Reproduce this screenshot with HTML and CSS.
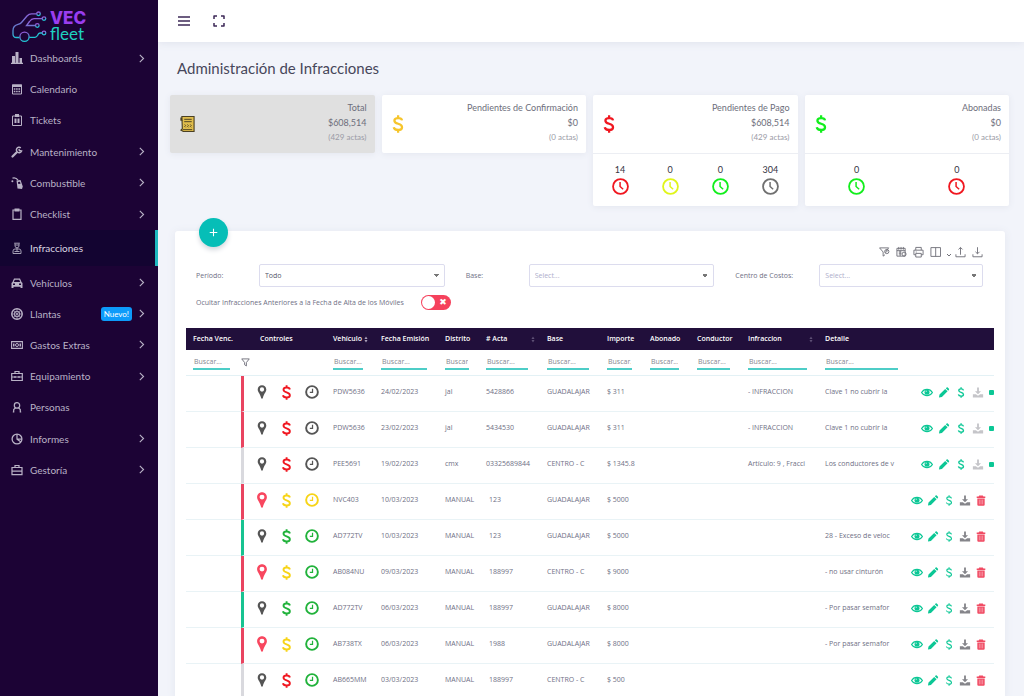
FILE: index.html
```html
<!DOCTYPE html>
<html lang="es">
<head>
<meta charset="utf-8">
<title>VEC Fleet - Administración de Infracciones</title>
<link rel="stylesheet" href="styles.css">
</head>
<body>
<svg class="sprite" aria-hidden="true">
  <symbol id="i-chev" viewBox="0 0 8 8"><path d="M2.500 .8 5.800 4 2.500 7.200" fill="none" stroke="currentColor" stroke-width="1"/></symbol>
  <symbol id="i-dollar" viewBox="0 0 10 16"><path d="M8.600 4.800C8.300 3.300 7 2.700 5.200 2.700 3.200 2.700 1.800 3.500 1.800 5c0 3.600 6.800 2 6.800 5.800 0 1.600-1.500 2.500-3.500 2.500C3 13.300 1.500 12.500 1.200 10.900M5.100.3V3M5.100 13v2.700" fill="none" stroke="currentColor" stroke-width="2"/></symbol>
  <symbol id="i-dollar-thin" viewBox="0 0 10 16"><path d="M8.600 4.800C8.300 3.300 7 2.700 5.200 2.700 3.200 2.700 1.800 3.500 1.800 5c0 3.600 6.800 2 6.800 5.800 0 1.600-1.500 2.500-3.500 2.500C3 13.300 1.500 12.500 1.200 10.900M5.100.3V3M5.100 13v2.700" fill="none" stroke="currentColor" stroke-width="1.600"/></symbol>
  <symbol id="i-clock" viewBox="0 0 16 16"><g fill="none" stroke="currentColor"><circle cx="8" cy="8" r="7" stroke-width="1.700"/><path d="M7.600 3.800V8l2.900 2.600" stroke-width="1.400"/></g></symbol>
  <symbol id="i-clock-b" viewBox="0 0 16 16"><g fill="none" stroke="currentColor"><circle cx="8" cy="8" r="6.700" stroke-width="2.200"/><path d="M8.600 4.200v4.300H5.500" stroke-width="1.400"/></g></symbol>
  <symbol id="i-pin" viewBox="0 0 10 15"><path fill="currentColor" fill-rule="evenodd" d="M5 .3C2.300.3.400 2.300.400 4.900.400 7.500 3 9.500 4.100 14c.2.900 1.600.9 1.800 0 1.100-4.500 3.700-6.500 3.700-9.100C9.600 2.300 7.700.3 5 .3ZM5 2.500a2.300 2.300 0 1 1 0 4.600 2.300 2.300 0 0 1 0-4.600Z"/></symbol>
  <symbol id="i-eye" viewBox="0 0 12 8"><path d="M.6 4C3-.2 9-.2 11.400 4 9 8.200 3 8.200.6 4Z" fill="none" stroke="currentColor" stroke-width="1.200"/><circle cx="6" cy="3.700" r="2.500" fill="currentColor"/><path d="M4.800 3.600Q5 2.500 6 2.400" stroke="#fff" stroke-width=".6" fill="none"/></symbol>
  <symbol id="i-pencil" viewBox="0 0 12 12"><path fill="currentColor" d="M.5 11.500 1.100 8.300 7.300 2.100 9.900 4.700 3.700 10.900ZM8 1.400 8.900.6Q9.500.1 10.100.6L11.400 1.900Q11.900 2.500 11.400 3.100L10.600 4Z"/></symbol>
  <symbol id="i-dl" viewBox="0 0 12 12"><path fill="currentColor" d="M5 .6H7V4.500H9.300L6 7.800 2.700 4.500H5ZM.4 7.800H3.700L6 9.500 8.300 7.800H11.600V11.500H.4Z"/></symbol>
  <symbol id="i-trash" viewBox="0 0 10 12"><path fill="currentColor" d="M3 .5H7L7.600 1.600H9.700V3.200H.3V1.600H2.400ZM1 3.700H9V10.500Q9 11.700 7.800 11.700H2.200Q1 11.700 1 10.500Z"/><path d="M3.200 5v5.200M5 5v5.200M6.800 5v5.200" stroke="#fff" stroke-opacity=".6" stroke-width=".7"/></symbol>
  <symbol id="i-sort" viewBox="0 0 5 9"><path fill="currentColor" d="M2.500.5 4.500 3.800H.5ZM2.500 8.500 4.500 5.200H.5Z"/></symbol>
</svg>

<div class="app">
  <aside class="sidebar">
    <a class="logo" href="#" aria-label="VEC fleet">
      <svg class="logo-car" viewBox="0 0 36 32">
        <defs><linearGradient id="lg" x1="0" y1="0" x2=".3" y2="1"><stop offset="0" stop-color="#a052dc"/><stop offset=".5" stop-color="#6a7bd0"/><stop offset="1" stop-color="#20c6d4"/></linearGradient></defs>
        <g fill="none" stroke="url(#lg)" stroke-width="1.300">
          <path d="M24.500 2.800H19.500Q17 2.800 15 5L9.500 11.500Q8.500 12.800 6 13.300 1 14.500 1 19.500V23Q1 26.500 4.500 26.500H7.500"/>
          <circle cx="26.500" cy="2.800" r="1.800"/><circle cx="32" cy="7.600" r="1.800"/><circle cx="25.300" cy="14.500" r="1.800"/><circle cx="32" cy="22" r="1.800"/><circle cx="12.500" cy="25.800" r="4.600"/>
          <path d="M30.200 7.600H22Q19.500 7.600 17.500 10.500L14.500 14.500H23.300M17.300 26.300H23Q24.500 26.300 25.500 24.500 26.500 22 28 22H30.200"/>
        </g>
      </svg>
      <span class="logo-text"><b>VEC</b><span>fleet</span></span>
    </a>
    <nav class="nav">
      <a href="#"><svg viewBox="0 0 12 12"><path fill="currentColor" d="M1 4h3v7H1zM4.500 0h3v11h-3zM8.500 6h2.500v5H8.500zM0 10.800h12V12H0z"/></svg><span>Dashboards</span><svg class="chev"><use href="#i-chev"/></svg></a>
      <a href="#"><svg viewBox="0 0 12 12"><path fill="none" stroke="currentColor" d="M1.500 2h9v9h-9z"/><path fill="currentColor" d="M1 1.500h10V4H1z"/><path stroke="currentColor" stroke-width="1.500" stroke-dasharray="1.600 .7" d="M2.800 6h7M2.800 8.500h7"/></svg><span>Calendario</span></a>
      <a href="#"><svg viewBox="0 0 12 12"><path fill="none" stroke="currentColor" d="M1.500 2h9v9.500h-9z"/><path fill="currentColor" d="M4 0h4v3H4zM3.500 4.500h2V9h-2zM6.500 4.500h2V9h-2z"/></svg><span>Tickets</span></a>
      <a href="#"><svg viewBox="0 0 12 12"><path fill="none" stroke="currentColor" stroke-width="2.200" stroke-linecap="round" d="M1.500 10.500 5.500 6.500"/><path fill="none" stroke="currentColor" stroke-width="1.500" d="M9.800 1.800A2.700 2.700 0 1 0 10.600 5L8.500 4.600 7.800 3.200"/></svg><span>Mantenimiento</span><svg class="chev"><use href="#i-chev"/></svg></a>
      <a href="#"><svg viewBox="0 0 12 12"><path fill="none" stroke="currentColor" stroke-width="1.200" d="M1.500 1.200Q5 .2 7 3.200"/><circle cx="1.400" cy="4.200" r="1" fill="currentColor"/><path fill="currentColor" fill-rule="evenodd" d="M5.500 3.500 9.500 3 11.800 9.500 11 12 6.500 11.500ZM7 5 7.300 7 9.500 6.800 9 4.800Z"/></svg><span>Combustible</span><svg class="chev"><use href="#i-chev"/></svg></a>
      <a href="#"><svg viewBox="0 0 12 12"><path fill="none" stroke="currentColor" stroke-width="1.200" d="M2 2h8v9.300H2z"/><path fill="currentColor" d="M3.500 .5h5v3h-5z"/></svg><span>Checklist</span><svg class="chev"><use href="#i-chev"/></svg></a>
      <a href="#" class="active" aria-current="page"><svg viewBox="0 0 12 12"><g fill="none" stroke="#a59fb5"><path d="M3.200 1.200h5.600M4 1.500v2.300a2 2 0 0 0 4 0V1.500M4 3h4M6 6v3"/><path d="M2 11.500V9Q2 7 4 7H8Q10 7 10 9v2.500ZM3.500 9.500h5"/></g></svg><span>Infracciones</span></a>
      <a href="#"><svg viewBox="0 0 12 12"><path fill="currentColor" fill-rule="evenodd" d="M3 1.500h6L10.500 5 11.500 6v5H9.500V9.800h-7V11H.5V6L1.500 5ZM3.800 2.800 2.800 5h6.400l-1-2.200ZM2 6.500V8h2V6.500ZM8 6.500V8h2V6.500Z"/></svg><span>Vehículos</span><svg class="chev"><use href="#i-chev"/></svg></a>
      <a href="#"><svg viewBox="0 0 12 12"><g fill="none" stroke="currentColor"><circle cx="6" cy="6" r="5.200" stroke-width="1.500"/><circle cx="6" cy="6" r="2.800"/><path d="M6 1v10M1 6h10M2.500 2.500l7 7M9.500 2.500l-7 7" stroke-width=".6"/></g></svg><span>Llantas</span><em class="badge">Nuevo!</em><svg class="chev"><use href="#i-chev"/></svg></a>
      <a href="#"><svg viewBox="0 0 12 12"><path fill="none" stroke="currentColor" stroke-width="1.100" d="M.6 2.600h10.800v6.800H.6z"/><circle cx="6" cy="6" r="1.500" fill="none" stroke="currentColor"/><path fill="currentColor" d="M2 4.500h1.500v3H2zM8.500 4.500H10v3H8.500z"/></svg><span>Gastos Extras</span><svg class="chev"><use href="#i-chev"/></svg></a>
      <a href="#"><svg viewBox="0 0 12 12"><path fill="none" stroke="currentColor" stroke-width="1.200" d="M.7 3.500h10.600v7H.7zM4 3.500V1.500h4v2M.7 7h10.600M4 6v2M8 6v2"/></svg><span>Equipamiento</span><svg class="chev"><use href="#i-chev"/></svg></a>
      <a href="#"><svg viewBox="0 0 12 12"><path fill="none" stroke="currentColor" stroke-width="1.200" d="M6 1.700a2.700 2.700 0 1 1 0 5.400 2.700 2.700 0 0 1 0-5.400ZM4.600 6.800 2.700 8.500V11M7.400 6.800 9.300 8.500V11M1.800 11h1.500M8.700 11h1.500"/></svg><span>Personas</span></a>
      <a href="#"><svg viewBox="0 0 12 12"><circle cx="6" cy="6" r="4.900" fill="none" stroke="currentColor" stroke-width="1.300"/><path fill="none" stroke="currentColor" stroke-width="1.200" d="M6 1V6.200L10 9M6 6.200H11"/></svg><span>Informes</span><svg class="chev"><use href="#i-chev"/></svg></a>
      <a href="#"><svg viewBox="0 0 12 12"><path fill="none" stroke="currentColor" stroke-width="1.200" d="M1 3.500h10v7.200H1zM4 3.500V1.500h4v2M1 7.200h10"/></svg><span>Gestoría</span><svg class="chev"><use href="#i-chev"/></svg></a>
    </nav>
  </aside>

  <div class="page">
    <header class="topbar">
      <button type="button" aria-label="Menú"><svg viewBox="0 0 12 12"><path stroke="currentColor" stroke-width="1.700" d="M0 2h12M0 6h12M0 10h12"/></svg></button>
      <button type="button" aria-label="Pantalla completa"><svg viewBox="0 0 12 12"><path fill="none" stroke="currentColor" stroke-width="1.500" stroke-linejoin="round" d="M1 4V1h3M8 1h3v3M11 8v3H8M4 11H1V8"/></svg></button>
    </header>
    <main class="main">
      <h1>Administración de Infracciones</h1>
      <section class="cards">
        <article class="card card-total">
          <div class="card-top">
            <svg class="receipt" viewBox="0 0 16 18"><path fill="#e0bd4c" stroke="#4a4023" stroke-width="1.200" d="M2 1h13v16H3.500L1 15.500 2.500 14ZM1 2v3h2"/><path fill="none" stroke="#4a4023" stroke-width="1" d="M4.500 4h8M4.500 6.500h8M5 9.500l1 1-1 1 1 1M8 9.500l1 1-1 1 1 1M11 9.500l1 1-1 1 1 1M3 15h10"/></svg>
            <p><span>Total</span><b>$608,514</b><small>(429 actas)</small></p>
          </div>
        </article>
        <article class="card">
          <div class="card-top"><svg class="money amber"><use href="#i-dollar"/></svg>
            <p><span>Pendientes de Confirmación</span><b>$0</b><small>(0 actas)</small></p>
          </div>
        </article>
        <article class="card">
          <div class="card-top"><svg class="money red"><use href="#i-dollar"/></svg>
            <p><span>Pendientes de Pago</span><b>$608,514</b><small>(429 actas)</small></p>
          </div>
          <ul class="counts">
            <li>14<svg class="red"><use href="#i-clock"/></svg></li>
            <li>0<svg class="lemon"><use href="#i-clock"/></svg></li>
            <li>0<svg class="lime"><use href="#i-clock"/></svg></li>
            <li>304<svg class="gray"><use href="#i-clock"/></svg></li>
          </ul>
        </article>
        <article class="card">
          <div class="card-top"><svg class="money lime"><use href="#i-dollar"/></svg>
            <p><span>Abonadas</span><b>$0</b><small>(0 actas)</small></p>
          </div>
          <ul class="counts">
            <li>0<svg class="lime"><use href="#i-clock"/></svg></li>
            <li>0<svg class="red"><use href="#i-clock"/></svg></li>
          </ul>
        </article>
      </section>

      <section class="panel">
        <button class="add" type="button" aria-label="Agregar"><svg viewBox="0 0 10 10"><path stroke="currentColor" stroke-width="1.200" d="M5 .8v8.400M.8 5h8.400"/></svg></button>
        <div class="tools">
          <button type="button" aria-label="Quitar filtros"><svg viewBox="0 0 12 12"><path d="M.6 1.500h10L7 5.500M.6 1.500 4.500 6v4.500L6.500 9"/><circle cx="8.500" cy="5.500" r="2.300"/><path d="M7 7 10 4"/></svg></button>
          <button type="button" aria-label="Exportar Excel"><svg viewBox="0 0 12 12"><path d="M1 2h9v8.500H1zM1 4.500h9M3 .5v3M5.500.5v3M8 .5v3M3 6h3M3 8h3M4.500 4.500v6"/><circle cx="8.800" cy="8.300" r="2.200"/></svg></button>
          <button type="button" aria-label="Imprimir"><svg viewBox="0 0 12 12"><path d="M3 4V1h6v3M3 9H1V4h10v5H9M3 7.500h6v4H3zM3 6h1"/></svg></button>
          <button type="button" aria-label="Columnas"><svg viewBox="0 0 12 12"><path d="M1 1.200h10.500v9.600H1zM6.200 1.200v9.600"/></svg></button>
          <button class="more" type="button" aria-label="Más columnas"><svg viewBox="0 0 6 12"><path d="M1 8l2 2 2-2"/></svg></button>
          <button type="button" aria-label="Subir"><svg viewBox="0 0 12 12"><path d="M6 9V1.200M3.800 3.200 6 1l2.200 2.200M1 8.500v2.700h10V8.500"/></svg></button>
          <button type="button" aria-label="Descargar"><svg viewBox="0 0 12 12"><path d="M6 .8v7M3.800 5.800 6 8l2.200-2.200M1 8.500v2.700h10V8.500"/></svg></button>
        </div>
        <form class="filters">
          <label for="periodo">Período:</label>
          <select id="periodo"><option>Todo</option></select>
          <label for="base">Base:</label>
          <select id="base" class="empty"><option>Select...</option></select>
          <label for="centro">Centro de Costos:</label>
          <select id="centro" class="empty"><option>Select...</option></select>
        </form>
        <div class="hide-row">
          <label for="ocultar">Ocultar Infracciones Anteriores a la Fecha de Alta de los Móviles</label>
          <input id="ocultar" class="switch" type="checkbox" role="switch">
        </div>

        <table class="grid">
          <colgroup><col class="c55"><col class="c85"><col class="c48"><col class="c64"><col class="c41"><col class="c61"><col class="c60"><col class="c43"><col class="c47"><col class="c51"><col class="c77"><col class="c87"><col class="c89"></colgroup>
          <thead>
            <tr class="heads"><th>Fecha Venc.</th><th class="ctl">Controles</th><th>Vehículo<svg class="sort on"><use href="#i-sort"/></svg></th><th>Fecha Emisión</th><th>Distrito</th><th># Acta<svg class="sort far"><use href="#i-sort"/></svg></th><th>Base</th><th>Importe</th><th>Abonado</th><th>Conductor</th><th>Infraccion<svg class="sort far"><use href="#i-sort"/></svg></th><th>Detalle</th><th aria-label="Acciones"></th></tr>
            <tr class="search"><td><input aria-label="Buscar fecha de vencimiento" placeholder="Buscar..."></td><td class="fun"><svg viewBox="0 0 10 10"><path d="M.8 1h8.400L6 5v3.800L4 7.500V5Z" fill="none" stroke="currentColor"/></svg></td><td><input aria-label="Buscar vehículo" placeholder="Buscar..."></td><td><input class="w46" aria-label="Buscar fecha de emisión" placeholder="Buscar..."></td><td><input class="w24" aria-label="Buscar distrito" placeholder="Buscar..."></td><td><input class="w42" aria-label="Buscar acta" placeholder="Buscar..."></td><td><input class="w42" aria-label="Buscar base" placeholder="Buscar..."></td><td><input aria-label="Buscar importe" placeholder="Buscar..."></td><td><input aria-label="Buscar abonado" placeholder="Buscar..."></td><td><input aria-label="Buscar conductor" placeholder="Buscar..."></td><td><input aria-label="Buscar infracción" placeholder="Buscar..."></td><td><input class="w73" aria-label="Buscar detalle" placeholder="Buscar..."></td><td></td></tr>
          </thead>
          <tbody>
            <tr><td></td><td class="state s-red"><div><svg class="pin"><use href="#i-pin"/></svg><svg class="cash red"><use href="#i-dollar"/></svg><svg class="clk"><use href="#i-clock-b"/></svg></div></td><td>PDW5636</td><td>24/02/2023</td><td>jal</td><td>5428866</td><td>GUADALAJAR</td><td>$ 311</td><td></td><td></td><td>- INFRACCION</td><td>Clave 1 no cubrir la</td><td class="acts"><div><button aria-label="Ver"><svg><use href="#i-eye"/></svg></button><button aria-label="Editar"><svg><use href="#i-pencil"/></svg></button><button aria-label="Pagar"><svg><use href="#i-dollar"/></svg></button><button aria-label="Descargar" class="pale"><svg><use href="#i-dl"/></svg></button><button aria-label="Estado" class="dot"></button></div></td></tr>
            <tr><td></td><td class="state s-red"><div><svg class="pin"><use href="#i-pin"/></svg><svg class="cash red"><use href="#i-dollar"/></svg><svg class="clk"><use href="#i-clock-b"/></svg></div></td><td>PDW5636</td><td>23/02/2023</td><td>jal</td><td>5434530</td><td>GUADALAJAR</td><td>$ 311</td><td></td><td></td><td>- INFRACCION</td><td>Clave 1 no cubrir la</td><td class="acts"><div><button aria-label="Ver"><svg><use href="#i-eye"/></svg></button><button aria-label="Editar"><svg><use href="#i-pencil"/></svg></button><button aria-label="Pagar"><svg><use href="#i-dollar"/></svg></button><button aria-label="Descargar" class="pale"><svg><use href="#i-dl"/></svg></button><button aria-label="Estado" class="dot"></button></div></td></tr>
            <tr><td></td><td class="state s-gray"><div><svg class="pin"><use href="#i-pin"/></svg><svg class="cash red"><use href="#i-dollar"/></svg><svg class="clk"><use href="#i-clock-b"/></svg></div></td><td>PEE5691</td><td>19/02/2023</td><td>cmx</td><td>03325689844</td><td>CENTRO - C</td><td>$ 1345.8</td><td></td><td></td><td>Artículo: 9 , Fracci</td><td>Los conductores de v</td><td class="acts"><div><button aria-label="Ver"><svg><use href="#i-eye"/></svg></button><button aria-label="Editar"><svg><use href="#i-pencil"/></svg></button><button aria-label="Pagar"><svg><use href="#i-dollar"/></svg></button><button aria-label="Descargar" class="pale"><svg><use href="#i-dl"/></svg></button><button aria-label="Estado" class="dot"></button></div></td></tr>
            <tr class="manual"><td></td><td class="state s-red"><div><svg class="pin hot"><use href="#i-pin"/></svg><svg class="cash yellow"><use href="#i-dollar"/></svg><svg class="clk yellow"><use href="#i-clock-b"/></svg></div></td><td>NVC403</td><td>10/03/2023</td><td>MANUAL</td><td class="acta">123</td><td>GUADALAJAR</td><td>$ 5000</td><td></td><td></td><td></td><td></td><td class="acts"><div><button aria-label="Ver"><svg><use href="#i-eye"/></svg></button><button aria-label="Editar"><svg><use href="#i-pencil"/></svg></button><button aria-label="Pagar"><svg><use href="#i-dollar-thin"/></svg></button><button aria-label="Descargar" class="dark"><svg><use href="#i-dl"/></svg></button><button aria-label="Eliminar" class="del"><svg><use href="#i-trash"/></svg></button></div></td></tr>
            <tr class="manual"><td></td><td class="state s-green"><div><svg class="pin"><use href="#i-pin"/></svg><svg class="cash green"><use href="#i-dollar"/></svg><svg class="clk green"><use href="#i-clock-b"/></svg></div></td><td>AD772TV</td><td>10/03/2023</td><td>MANUAL</td><td class="acta">123</td><td>GUADALAJAR</td><td>$ 5000</td><td></td><td></td><td></td><td>28 - Exceso de veloc</td><td class="acts"><div><button aria-label="Ver"><svg><use href="#i-eye"/></svg></button><button aria-label="Editar"><svg><use href="#i-pencil"/></svg></button><button aria-label="Pagar"><svg><use href="#i-dollar-thin"/></svg></button><button aria-label="Descargar" class="dark"><svg><use href="#i-dl"/></svg></button><button aria-label="Eliminar" class="del"><svg><use href="#i-trash"/></svg></button></div></td></tr>
            <tr class="manual"><td></td><td class="state s-red"><div><svg class="pin hot"><use href="#i-pin"/></svg><svg class="cash yellow"><use href="#i-dollar"/></svg><svg class="clk green"><use href="#i-clock-b"/></svg></div></td><td>AB084NU</td><td>09/03/2023</td><td>MANUAL</td><td class="acta">188997</td><td>CENTRO - C</td><td>$ 9000</td><td></td><td></td><td></td><td>- no usar cinturón</td><td class="acts"><div><button aria-label="Ver"><svg><use href="#i-eye"/></svg></button><button aria-label="Editar"><svg><use href="#i-pencil"/></svg></button><button aria-label="Pagar"><svg><use href="#i-dollar-thin"/></svg></button><button aria-label="Descargar" class="dark"><svg><use href="#i-dl"/></svg></button><button aria-label="Eliminar" class="del"><svg><use href="#i-trash"/></svg></button></div></td></tr>
            <tr class="manual"><td></td><td class="state s-green"><div><svg class="pin"><use href="#i-pin"/></svg><svg class="cash green"><use href="#i-dollar"/></svg><svg class="clk green"><use href="#i-clock-b"/></svg></div></td><td>AD772TV</td><td>06/03/2023</td><td>MANUAL</td><td class="acta">188997</td><td>GUADALAJAR</td><td>$ 8000</td><td></td><td></td><td></td><td>- Por pasar semafor</td><td class="acts"><div><button aria-label="Ver"><svg><use href="#i-eye"/></svg></button><button aria-label="Editar"><svg><use href="#i-pencil"/></svg></button><button aria-label="Pagar"><svg><use href="#i-dollar-thin"/></svg></button><button aria-label="Descargar" class="dark"><svg><use href="#i-dl"/></svg></button><button aria-label="Eliminar" class="del"><svg><use href="#i-trash"/></svg></button></div></td></tr>
            <tr class="manual"><td></td><td class="state s-red"><div><svg class="pin hot"><use href="#i-pin"/></svg><svg class="cash yellow"><use href="#i-dollar"/></svg><svg class="clk green"><use href="#i-clock-b"/></svg></div></td><td>AB738TX</td><td>06/03/2023</td><td>MANUAL</td><td class="acta">1988</td><td>GUADALAJAR</td><td>$ 8000</td><td></td><td></td><td></td><td>- Por pasar semafor</td><td class="acts"><div><button aria-label="Ver"><svg><use href="#i-eye"/></svg></button><button aria-label="Editar"><svg><use href="#i-pencil"/></svg></button><button aria-label="Pagar"><svg><use href="#i-dollar-thin"/></svg></button><button aria-label="Descargar" class="dark"><svg><use href="#i-dl"/></svg></button><button aria-label="Eliminar" class="del"><svg><use href="#i-trash"/></svg></button></div></td></tr>
            <tr class="manual"><td></td><td class="state s-gray"><div><svg class="pin"><use href="#i-pin"/></svg><svg class="cash red"><use href="#i-dollar"/></svg><svg class="clk green"><use href="#i-clock-b"/></svg></div></td><td>AB665MM</td><td>03/03/2023</td><td>MANUAL</td><td class="acta">188997</td><td>CENTRO - C</td><td>$ 500</td><td></td><td></td><td></td><td></td><td class="acts"><div><button aria-label="Ver"><svg><use href="#i-eye"/></svg></button><button aria-label="Editar"><svg><use href="#i-pencil"/></svg></button><button aria-label="Pagar"><svg><use href="#i-dollar-thin"/></svg></button><button aria-label="Descargar" class="dark"><svg><use href="#i-dl"/></svg></button><button aria-label="Eliminar" class="del"><svg><use href="#i-trash"/></svg></button></div></td></tr>
          </tbody>
        </table>
      </section>
    </main>
  </div>
</div>
</body>
</html>
```

FILE: styles.css
```css
* { box-sizing: border-box; }
body { margin: 0; font-family: "Open Sans", "Noto Sans", sans-serif; font-size: 7px; color: #6f7085; }
button { border: 0; padding: 0; background: none; color: inherit; display: flex; cursor: pointer; }
svg { display: block; flex: none; }
.sprite { position: absolute; width: 0; height: 0; }

.app { display: flex; height: 100vh; overflow: hidden; background: #f2f4fa; }

/* Sidebar */
.sidebar { position: relative; z-index: 1; width: 158px; flex: none; background: #1c0335; color: #b9b2c6; }
.logo { display: flex; gap: 2px; height: 43px; padding: 11px 0 0 12px; text-decoration: none; font-family: Lato, sans-serif; }
.logo-car { width: 36px; height: 32px; }
.logo-text { display: flex; flex-direction: column; font-size: 17px; line-height: 15px; color: #1fd1c0; }
.logo-text b { font: 800 17px/15px Inter, sans-serif; color: #9a3df0; }
.nav { display: flex; flex-direction: column; justify-content: space-between; min-height: 442px; font-family: Lato, sans-serif; font-size: 10px; }
.nav a { display: flex; align-items: center; height: 30px; padding: 0 12px 0 11px; color: inherit; text-decoration: none; }
.nav a > svg { width: 12px; height: 12px; }
.nav span { flex: 1; padding-left: 7px; }
.nav a > .chev { width: 9px; height: 9px; }
.nav .active { height: 36px; background: #130431; color: #dcd8e4; border-right: 3px solid #1fb9bf; }
.badge { padding: 0 3px; margin-right: 5px; border-radius: 3px; background: #0d9bfa; color: #fff; font-style: normal; font-size: 8px; line-height: 14px; }

/* Top bar */
.page { flex: 1; min-width: 0; }
.topbar { display: flex; align-items: center; gap: 23px; height: 42px; padding-left: 20px; background: #fff; color: #3d2857; box-shadow: 0 1px 8px #dfe2ec; }
.topbar svg { width: 12px; height: 12px; }
.main { padding: 19px 15px 0 12px; }
h1 { margin: 0 0 19px; padding-left: 7px; font: 400 15px/15px Lato, sans-serif; color: #47475a; }

/* Summary cards */
.cards { display: grid; grid-template-columns: repeat(4, 1fr); gap: 7px; align-items: start; min-height: 112px; font-family: Lato, sans-serif; color: #6d6e7b; }
.card { border-radius: 2px; background: #fff; box-shadow: 0 1px 6px #e3e6ef; }
.card-total { background: #e0e0e0; }
.card-top { display: flex; align-items: center; justify-content: space-between; height: 58px; padding: 0 8px 0 10px; }
.card-top p { display: flex; flex-direction: column; margin: 0; padding-bottom: 3px; text-align: right; font-size: 9px; line-height: 15px; }
.card-top b { font-size: 9px; font-weight: 400; }
.card-top small { font-size: 8px; color: #9a9ba6; }
.receipt { width: 15px; height: 18px; }
.money { width: 12px; height: 18px; }
.counts { display: flex; margin: 0; padding: 10px 2px 11px; border-top: 1px solid #eceef3; list-style: none; font-size: 9px; line-height: 12px; color: #33333f; }
.counts li { flex: 1; display: flex; flex-direction: column; align-items: center; gap: 2px; }
.counts svg { width: 17px; height: 17px; }

.red { color: #f01720; }
.amber { color: #f6c52c; }
.yellow { color: #f7d417; }
.lemon { color: #e0f51b; }
.lime { color: #12ee1c; }
.green { color: #21b23b; }
.gray { color: #707070; }

/* Panel */
.panel { position: relative; margin: 24px 4px 0 5px; padding: 15px 11px 0; border-radius: 3px; background: #fff; box-shadow: 0 1px 8px #e3e6ef; }
.add { position: absolute; top: -13px; left: 24px; width: 29px; height: 29px; align-items: center; justify-content: center; border-radius: 50%; background: #06beb7; color: #fff; box-shadow: 0 3px 5px #d5d8de; }
.add svg { width: 9px; height: 9px; }
.tools { display: flex; justify-content: flex-end; gap: 6px; padding-right: 11px; color: #707078; }
.tools svg { width: 11px; height: 12px; fill: none; stroke: currentColor; stroke-width: 1; }
.tools .more { margin: 0 -3px 0 -1px; }
.tools .more svg { width: 6px; }
.filters { display: grid; grid-template-columns: 63px 186fr 84px 186fr 105px 164fr; align-items: center; margin-top: 6px; padding: 0 11px 0 10px; }
.filters label:nth-of-type(n+2) { padding-left: 21px; }
.filters select {
  appearance: none; width: 100%; height: 23px; padding: 0 5px;
  border: 1px solid #dcdcee; border-radius: 2px; font: inherit; color: #55556a;
  background-color: #fff; background-repeat: no-repeat;
  background-image: linear-gradient(to bottom left, #777 50%, transparent 50%), linear-gradient(to bottom right, #777 50%, transparent 50%);
  background-size: 3px 3px; background-position: right 8px center, right 5px center;
}
.filters .empty { color: #aeaecb; }
.hide-row { display: flex; align-items: center; gap: 17px; height: 30px; padding-left: 10px; }
.switch { appearance: none; position: relative; width: 30px; height: 15px; margin: 0; border-radius: 8px; background: #f5415c; }
.switch::before { content: ""; position: absolute; left: 1px; top: 1px; width: 13px; height: 13px; border-radius: 50%; background: #fff; }
.switch::after { content: "✖"; position: absolute; right: 4px; top: 0; font: 9px/15px "DejaVu Sans", sans-serif; color: #fff; }

/* Table */
.grid { width: 100%; margin-top: 11px; table-layout: fixed; border-collapse: separate; border-spacing: 0; }
.c55 { width: 55px; } .c85 { width: 85px; } .c48 { width: 48px; } .c64 { width: 64px; } .c41 { width: 41px; } .c61 { width: 61px; } .c60 { width: 60px; }
.c43 { width: 43px; } .c47 { width: 47px; } .c51 { width: 51px; } .c77 { width: 77px; } .c87 { width: 87px; } .c89 { width: 89px; }
th, td { padding: 0 0 0 7px; text-align: left; white-space: nowrap; }
.heads th { height: 22px; background: #210f3b; color: #fff; font-size: 7px; font-weight: 600; line-height: 10px; }
.heads .ctl { padding-left: 19px; }
.sort { display: inline-block; width: 4px; height: 7px; margin-left: 2px; vertical-align: top; margin-top: 2px; color: #5d4f74; }
.sort.on { color: #a89fb8; }
.sort.far { float: right; margin-right: 5px; }
.search td { height: 26px; padding-right: 11px; border-bottom: 1px solid #e3f1f5; }
.search .fun { padding-left: 0; color: #6c6c78; }
.fun svg { width: 9px; height: 9px; }
.search input { display: block; width: 100%; height: 15px; padding: 0 1px; border: 0; border-bottom: 2px solid #4dcdc7; outline: 0; font: inherit; background: none; }
.search .w46 { width: 46px; } .search .w24 { width: 24px; } .search .w42 { width: 42px; } .search .w73 { width: 73px; }
.search input::placeholder { color: #85868f; opacity: 1; }
tbody td { height: 36px; padding-bottom: 4px; border-bottom: 1px solid #e9f3f6; }
.manual .acta { padding-left: 10px; }
tbody .state { padding: 0 0 3px 12px; border-left-width: 3px; border-left-style: solid; }
.state div { display: flex; align-items: center; gap: 13px; }
.s-red { border-left-color: #e94460; }
.s-green { border-left-color: #17c391; }
.s-gray { border-left-color: #d9d9de; }
.pin { width: 12px; height: 14px; color: #555; }
.pin.hot { height: 16px; color: #f8475f; }
.cash { width: 11px; height: 15px; }
.clk { width: 14px; height: 14px; color: #555; }
.clk.yellow { color: #f7d417; }
.clk.green { color: #21b23b; }
tbody .acts { padding-bottom: 2px; }
.acts div { display: flex; align-items: center; justify-content: flex-end; gap: 5px; color: #0bc795; }
.acts button { width: 12px; height: 12px; justify-content: center; align-items: center; }
.acts svg { width: 12px; height: 11px; }
.acts .pale { color: #c5c5c9; }
.acts .dark { color: #85858a; }
.acts .del { color: #f14b63; }
.acts .dot { width: 5px; height: 5px; border-radius: 1px; background: #0bc795; }
.manual .acts { padding-right: 7px; }
.manual .acts div { gap: 4px; }
```
